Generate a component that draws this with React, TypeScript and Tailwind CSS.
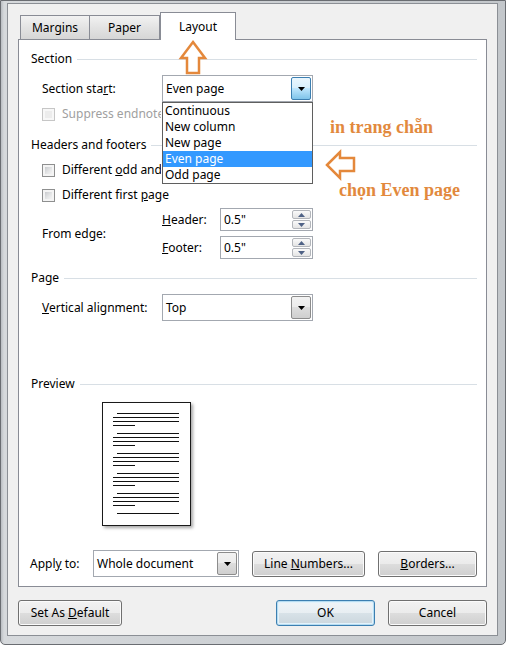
import React from 'react'

const ui = "font-['Noto_Sans','Open_Sans',sans-serif] text-[12px] leading-4 text-black"

const Caret = ({ color = '#000' }: { color?: string }) => (
    <svg width="7" height="4" viewBox="0 0 7 4">
        <path d="M0 0h7L3.5 4z" fill={color} />
    </svg>
)

const GroupHeader = ({ title, className = '' }: { title: string; className?: string }) => (
    <div className={`flex h-4 items-center gap-[5px] pl-3 pr-[9px] ${className}`}>
        <span>{title}</span>
        <div className="h-px flex-1 bg-[#d8dfe5]" />
    </div>
)

const Combo = ({ value, width, hot = false }: { value: string; width: string; hot?: boolean }) => (
    <div className={`flex h-[27px] items-stretch border border-[#a3a8b0] bg-white ${width}`}>
        <span className="flex flex-1 items-center pl-[3px]">{value}</span>
        <div
            className={`m-px flex w-[20px] items-center justify-center rounded-[2px] border ${
                hot
                    ? 'border-[#3c7fb1] bg-[linear-gradient(#eaf6fd,#d9f0fc_45%,#bee6fd_50%,#7fc4ea)]'
                    : 'border-[#8c8c8c] bg-[linear-gradient(#f2f2f2,#ebebeb_50%,#dddddd_50%,#cfcfcf)]'
            }`}
        >
            <Caret />
        </div>
    </div>
)

const CheckBox = ({ disabled = false }: { disabled?: boolean }) => (
    <div
        className={`flex h-[13px] w-[13px] shrink-0 border p-[2px] ${
            disabled ? 'border-[#c6c6c6] bg-[#f7f7f7]' : 'border-[#8e8f8f] bg-[#f4f4f4]'
        }`}
    >
        <div
            className={`flex-1 ${
                disabled
                    ? 'bg-[#ececec]'
                    : 'bg-[linear-gradient(135deg,#c9cbce,#e6e7e8_60%,#f3f3f3)]'
            }`}
        />
    </div>
)

const SpinBox = ({ value }: { value: string }) => (
    <div className="flex h-[23px] w-[93px] items-stretch border border-[#a3a8b0] bg-white">
        <span className="flex flex-1 items-center pl-[3px]">{value}</span>
        <div className="my-px mr-px flex w-[19px] flex-col gap-px">
            {[0, 1].map((i) => (
                <div
                    key={i}
                    className="flex flex-1 items-center justify-center rounded-[2px] border border-[#b3b6bb] bg-[linear-gradient(#fafafa,#e4e4e4)]"
                >
                    <svg width="7" height="4" viewBox="0 0 7 4" className={i === 0 ? 'rotate-180' : ''}>
                        <path d="M0 0h7L3.5 4z" fill="#4f6286" />
                    </svg>
                </div>
            ))}
        </div>
    </div>
)

const Button = ({ children, width, primary = false }: { children: React.ReactNode; width: string; primary?: boolean }) => (
    <button
        className={`flex h-[26px] items-center justify-center rounded-[3px] border ${width} ${
            primary
                ? 'border-[#3c7fb1] bg-[linear-gradient(#f0f5f8,#e8eef2_50%,#d8e2e8_50%,#cbd6dd)] shadow-[inset_0_0_0_1px_#b6dcf1,inset_0_0_0_2px_#e3f2fb]'
                : 'border-[#707070] bg-[linear-gradient(#f2f2f2,#ebebeb_50%,#dddddd_50%,#cfcfcf)] shadow-[inset_0_0_0_1px_#fbfbfb]'
        }`}
    >
        {children}
    </button>
)

const pageLine = (indent: boolean, short = false) =>
    short ? 'ml-[10px] w-[22px]' : indent ? 'ml-[14px] w-[62px]' : 'ml-[10px] w-[66px]'

const PreviewPage = () => (
    <div className="ml-[83px] mt-[10px] h-[124px] w-[89px] border border-[#1a1a1a] bg-white pt-[10px] shadow-[2px_2px_3px_rgba(0,0,0,0.35)]">
        <div className="flex flex-col gap-[7px]">
            {[0, 1, 2, 3, 4].map((g) => (
                <div key={g} className="flex flex-col gap-[3px]">
                    <div className={`h-px bg-[#111] ${pageLine(true)}`} />
                    <div className={`h-px bg-[#111] ${pageLine(false)}`} />
                    <div className={`h-px bg-[#111] ${pageLine(false)}`} />
                    <div className={`h-px bg-[#111] ${pageLine(false, true)}`} />
                </div>
            ))}
            <div className={`h-px bg-[#111] ${pageLine(true)}`} />
        </div>
    </div>
)

const sectionStarts = ['Continuous', 'New column', 'New page', 'Even page', 'Odd page']

const App = () => {
    return (
        <div className={`relative h-[645px] w-[506px] rounded-b-[5px] border border-[#6a6d72] bg-[linear-gradient(90deg,#b9bdc2,#d6d9dc_3px,#c3c7cb)] pb-[8px] pl-[6px] pr-[7px] pt-[2px] ${ui}`}>
            <div className="flex h-full flex-col border border-[#8b8f95] bg-[#f0f0f0] px-[10px] pt-[9px]">
                {/* tab strip */}
                <div className="flex h-[26px] items-end pl-[2px]">
                    <div className="flex h-[24px] w-[70px] items-center justify-center border border-b-0 border-[#898c95] bg-[linear-gradient(#f2f2f2,#e3e3e3_50%,#d6d6d6)]">
                        Margins
                    </div>
                    <div className="flex h-[24px] w-[70px] items-center justify-center border border-b-0 border-l-0 border-[#898c95] bg-[linear-gradient(#f2f2f2,#e3e3e3_50%,#d6d6d6)]">
                        Paper
                    </div>
                    <div className="relative z-10 -mb-px flex h-[28px] w-[76px] items-start justify-center border border-b-0 border-[#898c95] bg-white pt-[6px]">
                        Layout
                    </div>
                </div>

                {/* tab page */}
                <div className="flex h-[548px] flex-col border border-[#898c95] bg-white">
                    <GroupHeader title="Section" className="mt-[11px]" />

                    <div className="mt-[8px] flex h-[27px] items-center pl-[23px]">
                        <span className="w-[120px]">
                            Section sta<u>r</u>t:
                        </span>
                        <div className="relative">
                            <Combo value="Even page" width="w-[151px]" hot />
                            <div className="absolute left-0 top-full z-20 w-[151px] border border-[#5f5f5f] bg-white">
                                {sectionStarts.map((s) => (
                                    <div
                                        key={s}
                                        className={`h-4 pl-[2px] ${s === 'Even page' ? 'bg-[#3399ff] text-white' : ''}`}
                                    >
                                        {s}
                                    </div>
                                ))}
                            </div>
                        </div>
                    </div>

                    {/* rows partly hidden behind the open list */}
                    <div className="mt-[4px] flex h-4 items-center gap-[7px] pl-[23px] text-[#a0a0a0]">
                        <CheckBox disabled />
                        <span className="w-[99px] overflow-hidden whitespace-nowrap">Suppress endnotes</span>
                    </div>

                    <GroupHeader title="Headers and footers" className="mt-[15px]" />

                    <div className="mt-[9px] flex h-4 items-center gap-[7px] pl-[23px]">
                        <CheckBox />
                        <span className="w-[99px] overflow-hidden whitespace-nowrap">
                            Different <u>o</u>dd and even
                        </span>
                    </div>
                    <div className="mt-[9px] flex h-4 items-center gap-[7px] pl-[23px]">
                        <CheckBox />
                        <span>
                            Different first <u>p</u>age
                        </span>
                    </div>

                    <div className="mt-[5px] flex items-center pl-[23px]">
                        <span className="w-[120px]">From edge:</span>
                        <div className="flex flex-col gap-[5px]">
                            <div className="flex items-center">
                                <span className="w-[58px]">
                                    <u>H</u>eader:
                                </span>
                                <SpinBox value='0.5"' />
                            </div>
                            <div className="flex items-center">
                                <span className="w-[58px]">
                                    <u>F</u>ooter:
                                </span>
                                <SpinBox value='0.5"' />
                            </div>
                        </div>
                    </div>

                    <GroupHeader title="Page" className="mt-[11px]" />

                    <div className="mt-[8px] flex items-center pl-[23px]">
                        <span className="w-[120px]">
                            <u>V</u>ertical alignment:
                        </span>
                        <Combo value="Top" width="w-[151px]" />
                    </div>

                    <GroupHeader title="Preview" className="mt-[55px]" />
                    <PreviewPage />

                    <div className="mt-[24px] flex items-center pl-[11px]">
                        <span className="w-[63px]">
                            Appl<u>y</u> to:
                        </span>
                        <Combo value="Whole document" width="w-[146px]" />
                        <div className="ml-[13px]">
                            <Button width="w-[113px]">
                                <span>
                                    Line <u>N</u>umbers...
                                </span>
                            </Button>
                        </div>
                        <div className="ml-[13px]">
                            <Button width="w-[99px]">
                                <span>
                                    <u>B</u>orders...
                                </span>
                            </Button>
                        </div>
                    </div>
                </div>

                {/* dialog buttons */}
                <div className="mt-[13px] flex items-center">
                    <Button width="w-[104px]">
                        <span>
                            Set As <u>D</u>efault
                        </span>
                    </Button>
                    <div className="ml-auto flex gap-[13px]">
                        <Button width="w-[99px]" primary>
                            OK
                        </Button>
                        <Button width="w-[99px]">Cancel</Button>
                    </div>
                </div>
            </div>

            {/* callouts */}
            <svg className="pointer-events-none absolute left-0 top-0 z-30" width="506" height="645">
                <polygon
                    points="192,41 204,57 198,57 198,72 186,72 186,57 180,57"
                    fill="#fff"
                    stroke="#e4883b"
                    strokeWidth="2.5"
                    strokeLinejoin="miter"
                />
                <polygon
                    points="326,164 339,151 339,157 353,157 353,170 339,170 339,177"
                    fill="#fff"
                    stroke="#e4883b"
                    strokeWidth="2.5"
                    strokeLinejoin="miter"
                />
            </svg>
            <span className="absolute left-[329px] top-[116px] z-30 font-['Liberation_Serif',serif] text-[18px] font-bold leading-5 text-[#e2893d]">
                in trang chẵn
            </span>
            <span className="absolute left-[338px] top-[179px] z-30 font-['Liberation_Serif',serif] text-[18px] font-bold leading-5 text-[#e2893d]">
                chọn Even page
            </span>
        </div>
    )
}

export default App
